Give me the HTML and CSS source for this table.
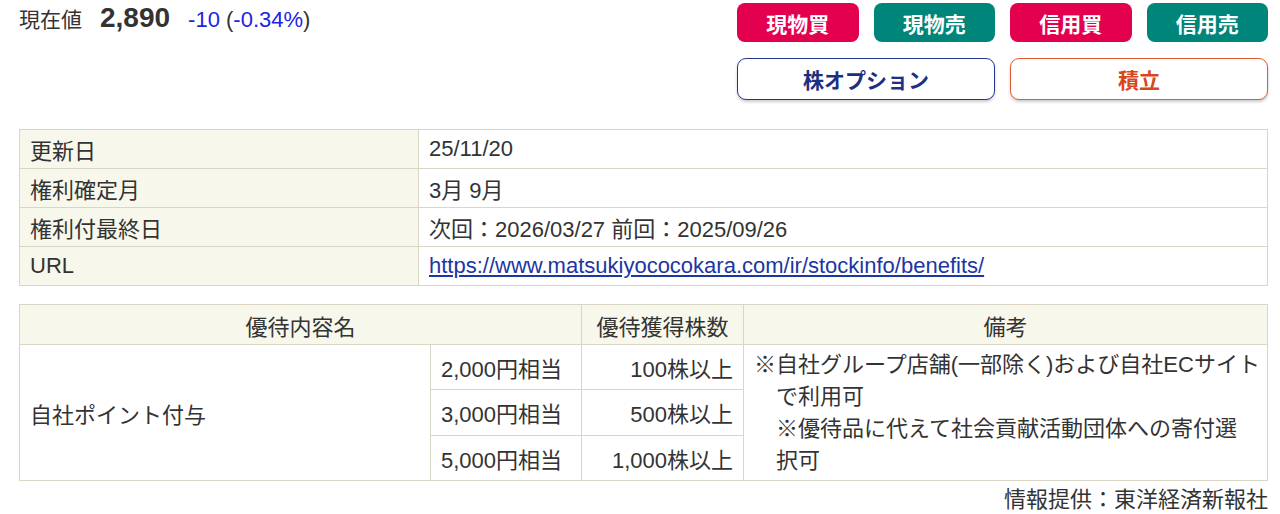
FILE: index.html
```html
<!DOCTYPE html>
<html lang="ja">
<head>
<meta charset="utf-8">
<title>株主優待</title>
<link rel="stylesheet" href="styles.css">
</head>
<body>
<div class="page">
  <div class="head">
    <div class="price">
      <span class="price-label">現在値</span>
      <span class="price-value">2,890</span>
      <span class="price-change"><span class="down">-10</span> (<span class="down">-0.34%</span>)</span>
    </div>
    <div class="actions">
      <div class="trade-row">
        <a class="btn btn-buy" href="#">現物買</a>
        <a class="btn btn-sell" href="#">現物売</a>
        <a class="btn btn-buy" href="#">信用買</a>
        <a class="btn btn-sell" href="#">信用売</a>
      </div>
      <div class="sub-row">
        <a class="btn-outline btn-option" href="#">株オプション</a>
        <a class="btn-outline btn-tsumitate" href="#">積立</a>
      </div>
    </div>
  </div>

  <table class="info">
    <colgroup><col class="info-label-col"><col></colgroup>
    <tbody>
      <tr><th>更新日</th><td>25/11/20</td></tr>
      <tr><th>権利確定月</th><td>3月 9月</td></tr>
      <tr><th>権利付最終日</th><td>次回：2026/03/27 前回：2025/09/26</td></tr>
      <tr><th>URL</th><td><a class="link" href="#">https://www.matsukiyococokara.com/ir/stockinfo/benefits/</a></td></tr>
    </tbody>
  </table>

  <table class="yutai">
    <colgroup>
      <col class="c-name"><col class="c-value"><col class="c-shares"><col>
    </colgroup>
    <thead>
      <tr><th colspan="2">優待内容名</th><th>優待獲得株数</th><th>備考</th></tr>
    </thead>
    <tbody>
      <tr>
        <td rowspan="3" class="name">自社ポイント付与</td>
        <td class="value">2,000円相当</td>
        <td class="shares">100株以上</td>
        <td rowspan="3" class="note"><p class="note-text">※自社グループ店舗(一部除く)および自社ECサイト<br>で利用可<br>※優待品に代えて社会貢献活動団体への寄付選<br>択可</p></td>
      </tr>
      <tr>
        <td class="value">3,000円相当</td>
        <td class="shares">500株以上</td>
      </tr>
      <tr>
        <td class="value">5,000円相当</td>
        <td class="shares">1,000株以上</td>
      </tr>
    </tbody>
  </table>

  <p class="source">情報提供：東洋経済新報社</p>
</div>
</body>
</html>
```

FILE: styles.css
```css
html, body {
  margin: 0;
  padding: 0;
  overflow: hidden;
  background: #ffffff;
}

body {
  font-family: "Liberation Sans", "Noto Sans CJK JP", sans-serif;
  font-size: 22px;
  color: #333333;
}

.page {
  padding: 3px 12px 0 19px;
}

/* ---------- header ---------- */
.head {
  display: flex;
  justify-content: space-between;
  align-items: flex-start;
}

.price {
  display: flex;
  align-items: baseline;
  gap: 18px;
  margin-top: 0;
  line-height: 30px;
}

.price-label {
  font-size: 21px;
}

.price-value {
  font-size: 28px;
  font-weight: bold;
}

.price-change {
  font-size: 22px;
  color: #333333;
}

.down {
  color: #2323e6;
}

.actions {
  width: 531px;
  display: flex;
  flex-direction: column;
  gap: 16px;
}

.trade-row {
  display: grid;
  grid-template-columns: repeat(4, 1fr);
  gap: 15px;
}

.sub-row {
  display: grid;
  grid-template-columns: repeat(2, 1fr);
  gap: 15px;
}

.btn {
  display: flex;
  align-items: center;
  justify-content: center;
  height: 39px;
  border-radius: 8px;
  color: #ffffff;
  font-weight: bold;
  font-size: 21px;
  text-decoration: none;
}

.btn-buy {
  background: #e3004f;
}

.btn-sell {
  background: #00857a;
}

.btn-outline {
  display: flex;
  align-items: center;
  justify-content: center;
  height: 40px;
  border-radius: 9px;
  background: #ffffff;
  font-weight: bold;
  font-size: 21px;
  text-decoration: none;
  box-shadow: 0 2px 3px rgba(0, 0, 0, 0.2);
}

.btn-option {
  border: 1px solid #23378c;
  color: #1c2f80;
}

.btn-tsumitate {
  border: 1px solid #e05a36;
  color: #d8461c;
}

/* ---------- tables ---------- */
table {
  width: 100%;
  border-collapse: collapse;
  table-layout: fixed;
}

th, td {
  border: 1px solid #d9d6c5;
  font-weight: normal;
}

.info {
  margin-top: 29px;
}

.info-label-col {
  width: 399px;
}

.info th,
.info td {
  height: 38px;
  padding: 0 10px;
  text-align: left;
  vertical-align: middle;
}

.info th {
  background: #f8f7eb;
}

.link {
  color: #1d36a3;
  text-decoration: underline;
}

.yutai {
  margin-top: 18px;
}

.c-name {
  width: 411px;
}

.c-value {
  width: 151px;
}

.c-shares {
  width: 162px;
}

.yutai thead th {
  background: #f8f7eb;
  height: 39px;
  padding: 0 10px;
  text-align: center;
  vertical-align: middle;
}

.yutai td {
  height: 44px;
  padding: 0 10px;
  vertical-align: middle;
}

.yutai .name {
  text-align: left;
}

.yutai .value {
  text-align: left;
}

.yutai .shares {
  text-align: right;
}

.yutai .note {
  padding: 4px 10px 3px;
}

.note-text {
  margin: 0;
  line-height: 32px;
  padding-left: 1em;
  text-indent: -1em;
  white-space: nowrap;
}

.source {
  margin: 4px 0 0;
  text-align: right;
  line-height: 30px;
}
```
